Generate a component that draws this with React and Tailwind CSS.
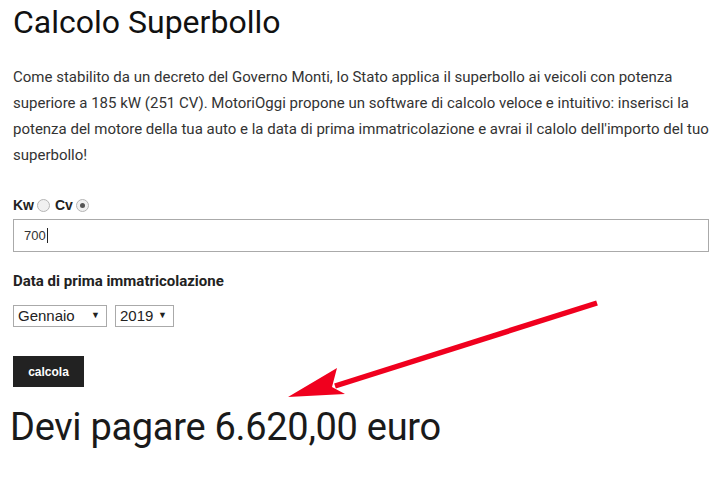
import React from "react";

function Radio({ checked }) {
  return (
    <span className="inline-flex items-center justify-center w-[13px] h-[13px] rounded-full border border-[#b5b5b5] bg-[#f0f0f0]">
      {checked && <span className="w-[5px] h-[5px] rounded-full bg-[#555]"></span>}
    </span>
  );
}

export default function App() {
  return (
    <div className="relative w-[719px] h-[483px] bg-white overflow-hidden">
      <div className="px-[13px] pt-[2px] font-['Roboto',sans-serif] text-[#333]">
        <h1 className="text-[32px] leading-[40px] text-[#111] font-normal">Calcolo Superbollo</h1>
        <p className="mt-[22px] text-[15px] leading-[26px] text-[#333] w-[702px]">
          Come stabilito da un decreto del Governo Monti, lo Stato applica il superbollo ai veicoli con potenza superiore a 185 kW (251 CV). MotoriOggi propone un software di calcolo veloce e intuitivo: inserisci la potenza del motore della tua auto e la data di prima immatricolazione e avrai il calolo dell'importo del tuo superbollo!
        </p>
        <div className="mt-[28px] flex items-center gap-[3px] font-['Liberation_Sans',Arial,sans-serif] font-bold text-[14px] text-[#222] leading-[18px]">
          <span>Kw</span>
          <Radio />
          <span className="ml-[2px]">Cv</span>
          <Radio checked />
        </div>
        <div className="mt-[5px] h-[33px] w-[696px] border border-[#aaa] flex items-center px-[10px] font-['Liberation_Sans',Arial,sans-serif] text-[13px] text-[#333]">
          700<span className="inline-block w-px h-[15px] bg-[#222] ml-px"></span>
        </div>
        <div className="mt-[20px] font-bold text-[15px] leading-[18px] text-[#222]">Data di prima immatricolazione</div>
        <div className="mt-[15px] flex gap-[8px] font-['Liberation_Sans',Arial,sans-serif] text-[15px] text-[#222]">
          <div className="w-[94px] h-[22px] border border-[#aaa] flex items-center justify-between pl-[4px] pr-[6px]">
            <span>Gennaio</span><span className="text-[9px]">▼</span>
          </div>
          <div className="w-[59px] h-[22px] border border-[#aaa] flex items-center justify-between pl-[4px] pr-[6px]">
            <span>2019</span><span className="text-[9px]">▼</span>
          </div>
        </div>
        <div className="mt-[29px] w-[71px] h-[31px] bg-[#222] text-white font-['Liberation_Sans',Arial,sans-serif] font-bold text-[12px] flex items-center justify-center">calcola</div>
        <div className="mt-[19px] -ml-[3px] text-[38px] leading-[42px] text-[#1a1a1a] tracking-[-0.3px]">Devi pagare 6.620,00 euro</div>
      </div>
      <svg className="absolute left-0 top-0" width="719" height="483" viewBox="0 0 719 483">
        <line x1="597" y1="303" x2="335" y2="386" stroke="#f0001e" strokeWidth="5.5" />
        <polygon points="288,397 337,368 332,387 345,394" fill="#f0001e" />
      </svg>
    </div>
  );
}
